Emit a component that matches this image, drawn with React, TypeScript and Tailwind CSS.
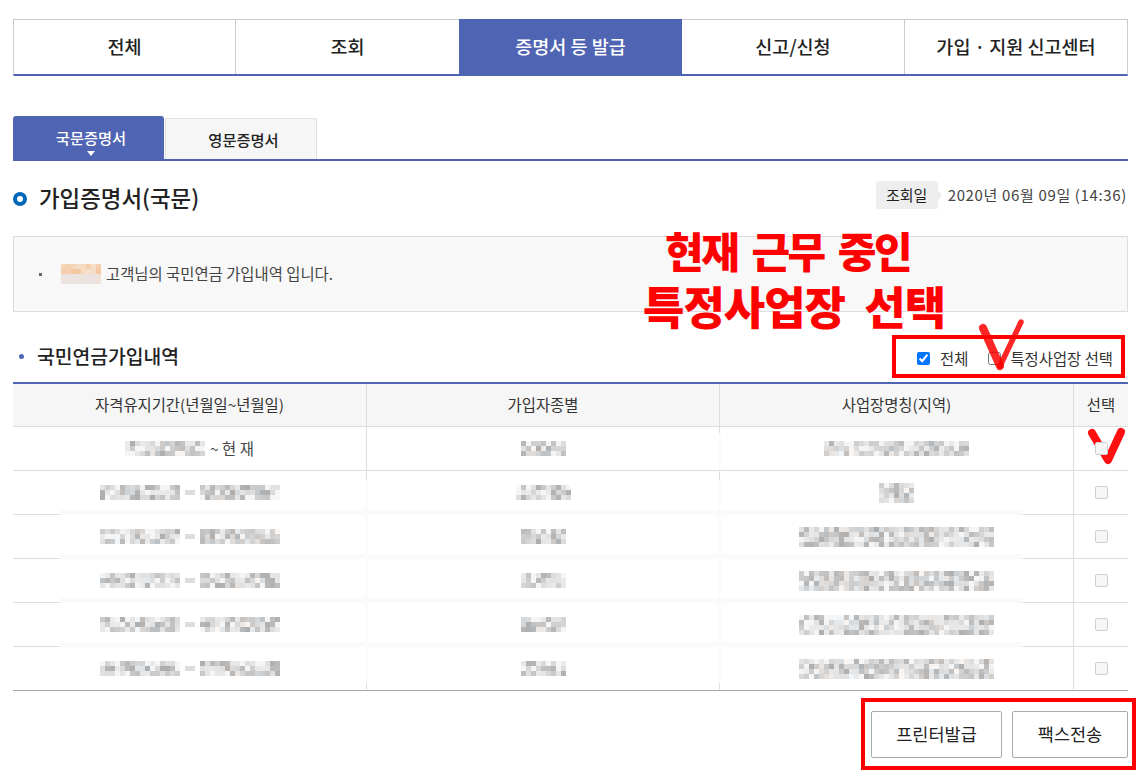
import React from 'react';

const BLUE = 'bg-[#4f65b3]';

const mainTabs = ['전체', '조회', '증명서 등 발급', '신고/신청', '가입 · 지원 신고센터'];

const colClass = 'grid grid-cols-[354px_353px_354px_54px]';

// pixelated (censored) text, as in the picture
function Mosaic({ cols, rows = 3, seed, tilde = false, orange = false }: { cols: number; rows?: number; seed: number; tilde?: boolean; orange?: boolean }) {
  let s = seed * 7919 + 13;
  const next = () => {
    s = (s * 1103515245 + 12345) & 0x7fffffff;
    return (s >> 8) % 1000 / 1000;
  };
  const cells: string[] = [];
  for (let y = 0; y < rows; y++) {
    for (let x = 0; x < cols; x++) {
      const r = next();
      const tintR = next();
      if (orange) {
        const v = y < 2 ? [245, 196 + Math.floor(r * 30), 155 + Math.floor(r * 50)] : [236, 226, 218 + Math.floor(r * 10)];
        cells.push(`rgb(${v[0]},${v[1]},${v[2]})`);
        continue;
      }
      if (tilde && x >= 16 && x <= 19) {
        const on = y === 1 && (x === 17 || x === 18);
        cells.push(on ? 'rgb(222,222,224)' : 'rgb(255,255,255)');
        continue;
      }
      let v = 236 - Math.floor(r * r * 56) - Math.floor(r * 8);
      if (r < 0.14) v = 245;
      const t = Math.floor(tintR * 7) - 3;
      cells.push(`rgb(${v + t},${v},${v - t})`);
    }
  }
  return (
    <div className="relative z-10 grid blur-[0.3px]" style={{ gridTemplateColumns: `repeat(${cols}, 5px)`, gridAutoRows: '5px' }}>
      {cells.map((c, i) => (
        <div key={i} style={{ backgroundColor: c }} />
      ))}
    </div>
  );
}

const Box = ({ className }: { className: string }) => <div className={`absolute border-[4px] border-[#ff0000] ${className}`} />;

const bodyRows = [
  { a: { cols: 36, seed: 2, tilde: true }, b: { cols: 11, seed: 11 }, c: { cols: 7, rows: 4, seed: 21 } },
  { a: { cols: 36, seed: 3, tilde: true }, b: { cols: 9, seed: 12 }, c: { cols: 39, rows: 4, seed: 22 } },
  { a: { cols: 36, seed: 4, tilde: true }, b: { cols: 9, seed: 13 }, c: { cols: 39, rows: 4, seed: 23 } },
  { a: { cols: 36, seed: 5, tilde: true }, b: { cols: 9, seed: 14 }, c: { cols: 39, rows: 4, seed: 24 } },
  { a: { cols: 36, seed: 6, tilde: true }, b: { cols: 9, seed: 15 }, c: { cols: 39, rows: 4, seed: 25 } },
];

const GrayCheck = () => <span className="relative z-10 block w-[13px] h-[13px] rounded-[2px] border border-[#cfcfcf] bg-[#f6f6f6]" />;

export default function App() {
  return (
    <div className="relative w-[1143px] h-[777px] overflow-hidden bg-white text-[#222] font-['Noto_Sans_CJK_KR','Noto_Sans',sans-serif]">
      <div className="w-[1115px] ml-[13px] pt-[19px]">
        {/* main tabs */}
        <div className="grid grid-cols-[222px_223px_223px_223px_1fr] h-[57px] border-t border-[#ccc] border-l border-r border-b-2 border-b-[#4f65b3]">
          {mainTabs.map((t, i) =>
            i === 2 ? (
              <div key={t} className={`${BLUE} -mt-px -mb-px flex items-center justify-center text-[18.5px] font-medium text-white`}>
                {t}
              </div>
            ) : (
              <div key={t} className={`flex items-center justify-center text-[18.5px] font-medium text-[#222] ${i === 0 || i === 3 ? 'border-r border-[#ccc]' : ''}`}>
                {t}
              </div>
            ),
          )}
        </div>

        {/* sub tabs */}
        <div className="flex items-end mt-[40px] h-[45px] border-b-2 border-[#4f65b3]">
          <div className={`${BLUE} relative w-[151px] h-[43px] rounded-t-[3px] flex items-center justify-center pl-[5px] text-[15.3px] font-medium text-white`}>
            국문증명서
            <span className="absolute left-[74px] bottom-[3px] w-0 h-0 border-x-[4px] border-x-transparent border-t-[5px] border-t-white" />
          </div>
          <div className="ml-px w-[152px] h-[41px] rounded-t-[3px] border border-b-0 border-[#e0e0e0] bg-[#f6f6f6] flex items-center justify-center pl-[5px] text-[15.3px] font-medium">
            영문증명서
          </div>
        </div>

        {/* title row */}
        <div className="flex items-center justify-between mt-[20px] h-[28px]">
          <div className="flex items-center mt-[8px]">
            <span className="w-[14px] h-[14px] rounded-full border-[4px] border-[#0068b7]" />
            <h1 className="ml-[12px] -mt-[3px] text-[22.4px] font-medium leading-none text-[#222]">가입증명서(국문)</h1>
          </div>
          <div className="flex items-center">
            <div className="relative w-[62px] h-[28px] bg-[#eeeeee] rounded-[2px] flex items-center justify-center text-[15px] text-[#222]">
              조회일
              <span className="absolute left-full top-[9px] w-0 h-0 border-y-[5px] border-y-transparent border-l-[4px] border-l-[#eeeeee]" />
            </div>
            <span className="ml-[10px] mr-px text-[15px] text-[#444] tracking-[0.65px]">2020년 06월 09일 (14:36)</span>
          </div>
        </div>

        {/* notice box */}
        <div className="mt-[27px] h-[76px] border border-[#dddddd] bg-[#f8f8f8] flex items-center">
          <span className="ml-[25px] w-[3px] h-[3px] bg-[#666]" />
          <div className="ml-[19px]">
            <Mosaic cols={8} rows={4} seed={1} orange />
          </div>
          <span className="ml-[5px] text-[15.4px] text-[#444]">고객님의 국민연금 가입내역 입니다.</span>
        </div>

        {/* section heading */}
        <div className="flex items-center justify-between h-[70px] pt-[20px]">
          <div className="flex items-center">
            <span className="ml-[6px] w-[5px] h-[5px] rounded-full bg-[#4f65b3]" />
            <h2 className="ml-[13px] text-[19.3px] font-medium leading-none text-[#222]">국민연금가입내역</h2>
          </div>
          <div className="flex items-center mr-[15px] mt-[3px] text-[15.4px] text-[#333]">
            <input type="checkbox" defaultChecked className="w-[13px] h-[13px] m-0" readOnly />
            <span className="ml-[10px]">전체</span>
            <input type="checkbox" className="ml-[20px] w-[13px] h-[13px] m-0" readOnly />
            <span className="ml-[9px]">특정사업장 선택</span>
          </div>
        </div>

        {/* table */}
        <div className="border-t-2 border-[#4f65b3]">
          <div className={`${colClass} h-[43px] bg-[#f6f6f6] border-b border-[#dddddd] text-[15.4px] text-[#333]`}>
            <div className="flex items-center justify-center border-r border-[#dddddd]">자격유지기간(년월일~년월일)</div>
            <div className="flex items-center justify-center border-r border-[#dddddd]">가입자종별</div>
            <div className="flex items-center justify-center border-r border-[#dddddd]">사업장명칭(지역)</div>
            <div className="flex items-center justify-center">선택</div>
          </div>

          <div className="relative">
            {/* first row */}
            <div className={`${colClass} h-[44px] border-b border-[#dddddd]`}>
              <div className="flex items-center justify-center gap-[5px] border-r border-[#dddddd] text-[15.4px] text-[#444]">
                <Mosaic cols={16} seed={31} />
                <span className="relative z-10">~ 현 재</span>
              </div>
              <div className="flex items-center justify-center border-r border-[#dddddd]">
                <Mosaic cols={9} seed={32} />
              </div>
              <div className="flex items-center justify-center border-r border-[#dddddd] pr-[1px]">
                <Mosaic cols={29} seed={33} />
              </div>
              <div className="flex items-center justify-center">
                <GrayCheck />
              </div>
            </div>

            {bodyRows.map((r, i) => (
              <div key={i} className={`${colClass} h-[44px] border-b ${i === 4 ? 'border-[#aaaaaa]' : 'border-[#dddddd]'}`}>
                <div className="flex items-center justify-center border-r border-[#dddddd]">
                  <Mosaic {...r.a} />
                </div>
                <div className="flex items-center justify-center border-r border-[#dddddd]">
                  <Mosaic {...r.b} />
                </div>
                <div className="flex items-center justify-center border-r border-[#dddddd]">
                  <Mosaic {...r.c} />
                </div>
                <div className="flex items-center justify-center">
                  <GrayCheck />
                </div>
              </div>
            ))}

            {/* washed-out patch the mosaic tool left over the grid lines */}
            <div className="absolute left-[47px] top-[53px] w-[963px] h-[203px] bg-white">
              <div className="flex flex-col gap-[39px] pt-[30px]">
                <div className="h-[5px] bg-[#fafafa]" />
                <div className="h-[5px] bg-[#fafafa]" />
                <div className="h-[5px] bg-[#fafafa]" />
                <div className="h-[5px] bg-[#fafafa]" />
              </div>
              <div className="absolute left-[305px] top-0 w-[3px] h-full bg-[#fbfbfb]" />
              <div className="absolute left-[658px] top-0 w-[3px] h-full bg-[#fbfbfb]" />
            </div>
            <div className="absolute left-[705px] top-[6px] w-[3px] h-[37px] bg-[#fbfbfb]" />
          </div>
        </div>

        {/* buttons */}
        <div className="flex justify-end gap-[10px] mt-[20px]">
          <button className="w-[131px] h-[47px] border border-[#aaaaaa] rounded-[2px] bg-white text-[17.5px] text-[#222]">프린터발급</button>
          <button className="w-[116px] h-[47px] border border-[#aaaaaa] rounded-[2px] bg-white text-[17.5px] text-[#222]">팩스전송</button>
        </div>
      </div>

      {/* red markup drawn over the capture */}
      <Box className="left-[892px] top-[335px] w-[233px] h-[43px]" />
      <Box className="left-[861px] top-[698px] w-[275px] h-[72px]" />

      <div className="absolute left-[643px] top-[222px] whitespace-nowrap text-[#ff0000] font-black">
        <div className="ml-[22px] text-[42px] leading-[56px] tracking-[-2.5px] [word-spacing:7px]">현재 근무 중인</div>
        <div className="text-[45px] leading-[56px] tracking-[-1px] [word-spacing:10px]">특정사업장 선택</div>
      </div>

      <svg className="absolute left-[975px] top-[315px] w-[55px] h-[60px]" viewBox="0 0 55 60" fill="none">
        <path d="M8 13 L25 51" stroke="#ff0000" strokeOpacity="0.85" strokeWidth="8" strokeLinecap="round" />
        <path d="M25 51 L46 7" stroke="#ff0000" strokeOpacity="0.85" strokeWidth="5.5" strokeLinecap="round" />
      </svg>
      <svg className="absolute left-[1085px] top-[425px] w-[45px] h-[42px]" viewBox="0 0 45 42" fill="none">
        <path d="M7 8 L23 35 L36 7" stroke="#ff1010" strokeWidth="8" strokeLinecap="round" strokeLinejoin="round" />
      </svg>
    </div>
  );
}
